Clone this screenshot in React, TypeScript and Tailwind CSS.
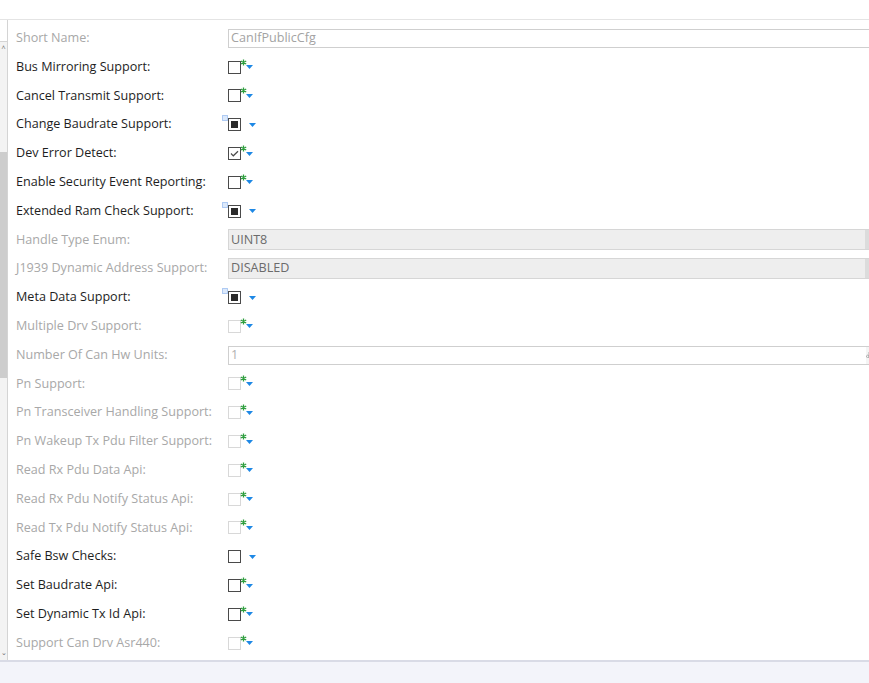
import React from "react";

type Kind = "text" | "combo" | "number" | "check" | "checked" | "ind" | "plain";

type Row = { label: string; kind: Kind; disabled?: boolean; value?: string };

const rows: Row[] = [
  { label: "Short Name:", kind: "text", disabled: true, value: "CanIfPublicCfg" },
  { label: "Bus Mirroring Support:", kind: "check" },
  { label: "Cancel Transmit Support:", kind: "check" },
  { label: "Change Baudrate Support:", kind: "ind" },
  { label: "Dev Error Detect:", kind: "checked" },
  { label: "Enable Security Event Reporting:", kind: "check" },
  { label: "Extended Ram Check Support:", kind: "ind" },
  { label: "Handle Type Enum:", kind: "combo", disabled: true, value: "UINT8" },
  { label: "J1939 Dynamic Address Support:", kind: "combo", disabled: true, value: "DISABLED" },
  { label: "Meta Data Support:", kind: "ind" },
  { label: "Multiple Drv Support:", kind: "check", disabled: true },
  { label: "Number Of Can Hw Units:", kind: "number", disabled: true, value: "1" },
  { label: "Pn Support:", kind: "check", disabled: true },
  { label: "Pn Transceiver Handling Support:", kind: "check", disabled: true },
  { label: "Pn Wakeup Tx Pdu Filter Support:", kind: "check", disabled: true },
  { label: "Read Rx Pdu Data Api:", kind: "check", disabled: true },
  { label: "Read Rx Pdu Notify Status Api:", kind: "check", disabled: true },
  { label: "Read Tx Pdu Notify Status Api:", kind: "check", disabled: true },
  { label: "Safe Bsw Checks:", kind: "plain" },
  { label: "Set Baudrate Api:", kind: "check" },
  { label: "Set Dynamic Tx Id Api:", kind: "check" },
  { label: "Support Can Drv Asr440:", kind: "check", disabled: true },
];

function Arrow() {
  return (
    <svg width="7" height="4" viewBox="0 0 7 4" className="block">
      <path d="M0 0h7L3.5 4z" fill="#1e88e5" />
    </svg>
  );
}

// small green "new" asterisk in the corner
function GreenMark() {
  return (
    <svg width="7" height="7" viewBox="0 0 7 7" className="absolute -top-[3px] left-[11px]">
      <path d="M3.5 0.5v6M0.8 2l5.4 3M0.8 5l5.4-3" stroke="#2e9e3e" strokeWidth="1.3" />
    </svg>
  );
}

function DotsIcon() {
  return (
    <svg width="6" height="6" viewBox="0 0 6 6" className="absolute -top-[4px] -left-[7px]">
      <rect x="0.5" y="0.5" width="5" height="5" fill="#dce9fb" stroke="#6fa0e8" strokeWidth="1" strokeDasharray="1 1" />
    </svg>
  );
}

function Check({ kind, disabled }: { kind: Kind; disabled?: boolean }) {
  const border = disabled ? "border-[#d8d8d8]" : "border-[#4a4a4a]";
  return (
    <div className="flex items-center">
      <div className={`relative h-[13px] w-[13px] border bg-white ${border}`}>
        {kind === "checked" && (
          <svg width="11" height="11" viewBox="0 0 11 11" className="absolute left-0 top-0">
            <path d="M2 5.5l2.3 2.3L9 3.2" stroke="#4a4a4a" strokeWidth="1.2" fill="none" />
          </svg>
        )}
        {kind === "ind" && <div className="absolute left-[2px] top-[2px] h-[7px] w-[7px] bg-[#2b2b2b]" />}
        {kind === "ind" && <DotsIcon />}
        {(kind === "check" || kind === "checked") && <GreenMark />}
      </div>
      <div className={kind === "check" || kind === "checked" ? "ml-[5px]" : "ml-[8px]"}>
        <Arrow />
      </div>
    </div>
  );
}

function Control({ row }: { row: Row }) {
  if (row.kind === "text") {
    return (
      <div className="flex h-[19px] w-[645px] items-center border border-[#cfcfcf] bg-white pl-[2px] text-[#a3a3a3]">
        {row.value}
      </div>
    );
  }
  if (row.kind === "combo") {
    return (
      <div className="flex h-[21px] w-[645px] border border-[#d6d6d6] bg-[#eeeeee]">
        <div className="flex flex-1 items-center pl-[2px] text-[#6b6b6b]">{row.value}</div>
        <div className="w-[7px] bg-[#dcdcdc]" />
      </div>
    );
  }
  if (row.kind === "number") {
    return (
      <div className="flex h-[19px] w-[645px] border border-[#cfcfcf] bg-white">
        <div className="flex flex-1 items-center pl-[2px] text-[#b0b0b0]">{row.value}</div>
        <div className="flex w-[6px] items-center bg-[#f4f4f4]">
          <svg width="4" height="6" viewBox="0 0 4 6">
            <path d="M3 0v6M3 4.5a1.3 1.3 0 1 1 0-.1" stroke="#999" strokeWidth="0.8" fill="none" />
          </svg>
        </div>
      </div>
    );
  }
  return <Check kind={row.kind} disabled={row.disabled} />;
}

export default function App() {
  return (
    <div className="flex h-[683px] w-[869px] flex-col overflow-hidden bg-white font-['Open_Sans',sans-serif] text-[12.6px]">
      <div className="h-[20px] border-b border-[#e4e4e4]" />
      <div className="flex h-[642px] border-b-2 border-[#d9dbe6]">
        <div className="flex w-[9px] flex-col border-r border-[#d4d4d4] bg-[#f3f3f3]">
          <div className="h-[22px] border-b border-[#d4d4d4] bg-white" />
          <div className="flex h-[14px] items-center justify-center text-[7px] text-[#666]">^</div>
          <div className="mt-[96px] h-[226px] w-[7px] bg-[#cdcdcd]" />
          <div className="flex-1" />
          <div className="flex h-[14px] items-center justify-center text-[7px] text-[#666]">⌄</div>
        </div>
        <div className="flex flex-1 flex-col pt-[4px]">
          {rows.map((r) => (
            <div key={r.label} className="flex h-[28.8px] shrink-0 items-center">
              <div className={`w-[220px] pl-[8px] ${r.disabled ? "text-[#a8a8a8]" : "text-[#1e1e1e]"}`}>{r.label}</div>
              <Control row={r} />
            </div>
          ))}
        </div>
      </div>
      <div className="flex-1 bg-[#f3f4fa]" />
    </div>
  );
}
